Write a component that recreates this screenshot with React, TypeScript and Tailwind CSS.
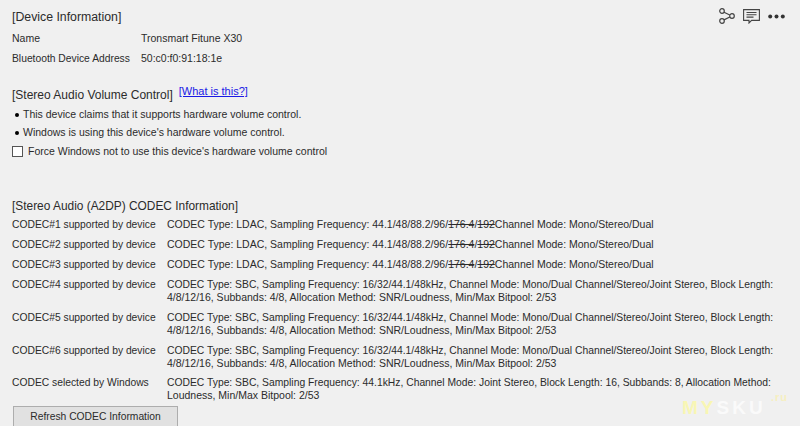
const font = { fontFamily: '"Liberation Sans", sans-serif' };

const ldac = (
  <>
    CODEC Type: LDAC, Sampling Frequency: 44.1/48/88.2/96/<span className="line-through">176.4</span>/
    <span className="line-through">192</span>Channel Mode: Mono/Stereo/Dual
  </>
);
const sbc = (
  <>
    <span className="text-[10.33px]">
      CODEC Type: SBC, Sampling Frequency: 16/32/44.1/48kHz, Channel Mode: Mono/Dual Channel/Stereo/Joint Stereo, Block Length:
    </span>
    <br />
    4/8/12/16, Subbands: 4/8, Allocation Method: SNR/Loudness, Min/Max Bitpool: 2/53
  </>
);

function CodecRow({ label, children }: { label: string; children: React.ReactNode }) {
  return (
    <div className="flex whitespace-nowrap">
      <div className="w-[155px] shrink-0 text-[10.3px]">{label}</div>
      <div className="leading-[13px] py-px">{children}</div>
    </div>
  );
}

export default function App() {
  return (
    <div
      style={font}
      className="relative w-[800px] h-[426px] overflow-hidden bg-[#f0f0f0] text-[#2b2b2b] text-[10.5px] leading-[15px] pl-3 pt-[9px]"
    >
      <div className="text-[12.3px] leading-[16px]">[Device Information]</div>
      <div className="mt-[6px] flex">
        <div className="w-[129px]">Name</div>
        <div>Tronsmart Fitune X30</div>
      </div>
      <div className="mt-[5px] flex">
        <div className="w-[129px] whitespace-nowrap text-[10.3px]">Bluetooth Device Address</div>
        <div>50:c0:f0:91:18:1e</div>
      </div>

      <div className="mt-[21px] flex items-start text-[12px] leading-[16px]">
        <span>[Stereo Audio Volume Control]</span>
        <a className="ml-[6px] -mt-[3px] text-[11px] leading-[15px] text-[#1a1ae6] underline">[What is this?]</a>
      </div>
      <div className="mt-[4px] flex items-center">
        <span className="w-1 h-1 ml-[3px] mr-[4px] rounded-full bg-black" />
        This device claims that it supports hardware volume control.
      </div>
      <div className="mt-[3px] flex items-center">
        <span className="w-1 h-1 ml-[3px] mr-[4px] rounded-full bg-black" />
        Windows is using this device's hardware volume control.
      </div>
      <div className="mt-[4px] flex items-center gap-[5px]">
        <span className="w-[11px] h-[11px] border border-[#555] bg-white" />
        Force Windows not to use this device's hardware volume control
      </div>

      <div className="mt-[39px] text-[11.9px] leading-[16px]">[Stereo Audio (A2DP) CODEC Information]</div>
      <div className="mt-[3px] flex flex-col gap-[5px]">
        <CodecRow label="CODEC#1 supported by device">{ldac}</CodecRow>
        <CodecRow label="CODEC#2 supported by device">{ldac}</CodecRow>
        <CodecRow label="CODEC#3 supported by device">{ldac}</CodecRow>
        <CodecRow label="CODEC#4 supported by device">{sbc}</CodecRow>
        <CodecRow label="CODEC#5 supported by device">{sbc}</CodecRow>
        <CodecRow label="CODEC#6 supported by device">{sbc}</CodecRow>
        <div className="-mt-px">
          <CodecRow label="CODEC selected by Windows">
            <span className="text-[10.33px]">
              CODEC Type: SBC, Sampling Frequency: 44.1kHz, Channel Mode: Joint Stereo, Block Length: 16, Subbands: 8, Allocation Method:
            </span>
            <br />
            Loudness, Min/Max Bitpool: 2/53
          </CodecRow>
        </div>
      </div>
      <button className="mt-[3px] ml-px block w-[165px] h-[21px] border border-[#adadad] bg-[#e1e1e1] text-center text-[10.3px]">
        Refresh CODEC Information
      </button>

      {/* Share, comment and more icons */}
      <div className="absolute left-[719px] top-[8px] flex items-start text-[#444]">
        <svg width="16" height="16" viewBox="0 0 16 16" fill="none" stroke="currentColor" strokeWidth="1.2">
          <circle cx="3" cy="3" r="2.3" />
          <circle cx="3" cy="13" r="2.3" />
          <circle cx="13" cy="8" r="2.3" />
          <path d="M5 4.3 10.8 7M5 11.9 10.8 9" />
        </svg>
        <svg className="ml-[8px] mt-px" width="17" height="15" viewBox="0 0 17 15" fill="none" stroke="currentColor" strokeWidth="1.1">
          <path d="M.6.6h15.8v10.8H8.6L6 14v-2.6H.6z" />
          <path d="M3.5 3.5h10M3.5 5.8h10M3.5 8.1h7" />
        </svg>
        <svg className="ml-[8px] mt-[6px]" width="17" height="5" viewBox="0 0 17 5" fill="#333">
          <circle cx="2.2" cy="2.5" r="2" />
          <circle cx="8.5" cy="2.5" r="2" />
          <circle cx="14.8" cy="2.5" r="2" />
        </svg>
      </div>

      {/* Watermark */}
      <div className="absolute left-[682px] top-[397px] text-[19px] leading-[22px] font-bold tracking-[3px] text-white/70">
        <span className="text-[#f8f6b4]">MY</span>SKU
        <span className="absolute left-[89px] -top-[7px] text-[11px] leading-[14px] tracking-[1px] text-[#f6efc0]">.ru</span>
      </div>
    </div>
  );
}
